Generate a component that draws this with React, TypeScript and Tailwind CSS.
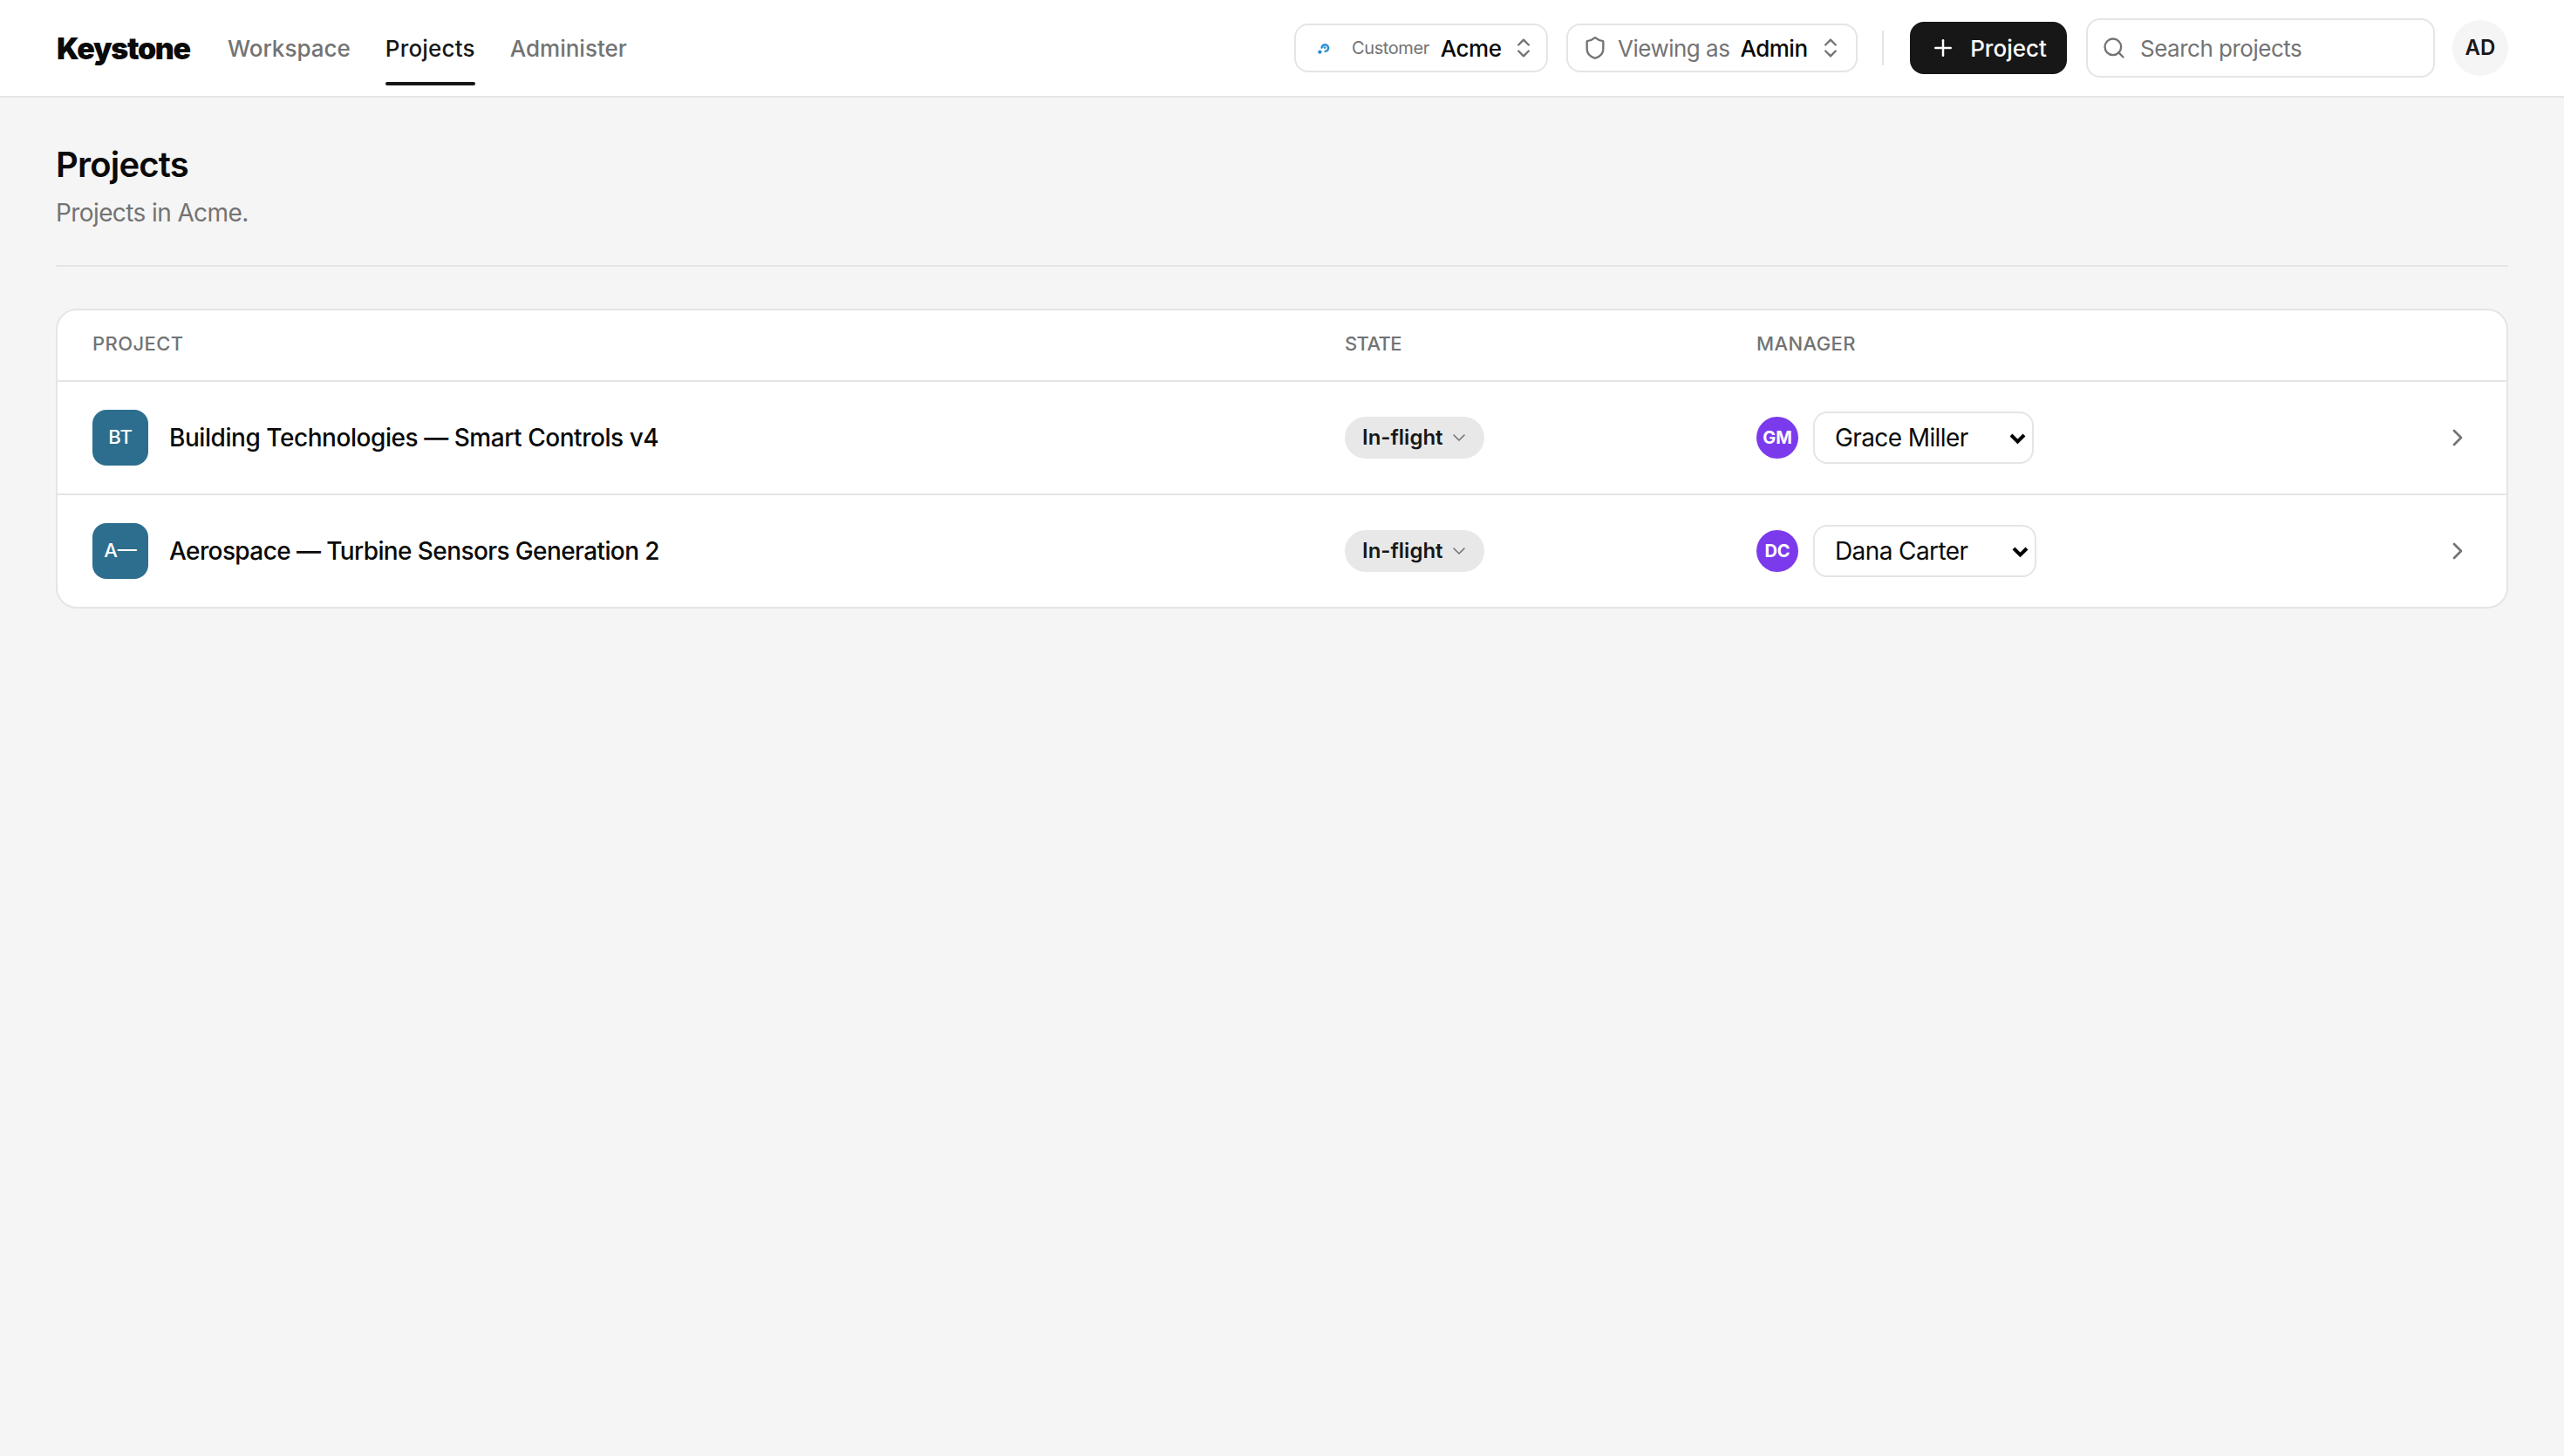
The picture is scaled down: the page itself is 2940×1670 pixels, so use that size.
import { ChevronDown, ChevronRight, ChevronsUpDown, Plus, Search, Shield } from "lucide-react";

const font = "font-['Inter','Liberation_Sans',sans-serif]";

// Small swirl mark next to the customer switcher
function CustomerMark() {
  return (
    <svg viewBox="0 0 14 13" className="w-[14px] h-[13px] shrink-0">
      <path d="M4.6 6.6a3.8 3.8 0 1 1 3 3.2" fill="none" stroke="#2b8fd0" strokeWidth="2.4" />
      <circle cx="8" cy="5.6" r="1.4" fill="#2b8fd0" />
      <circle cx="2.4" cy="10.6" r="2.2" fill="#2b8fd0" />
    </svg>
  );
}

function NavLink({ label, active }: { label: string; active?: boolean }) {
  return (
    <a
      className={`h-[110px] flex items-center relative text-[26px] font-medium ${active ? "text-[#171717] tracking-[0.2px]" : "text-[#737373]"}`}
    >
      {label}
      {active && <span className="absolute left-0 right-0 bottom-[12px] h-[4px] rounded-full bg-[#171717]" />}
    </a>
  );
}

const rows = [
  { code: "BT", name: "Building Technologies — Smart Controls v4", tracking: "tracking-[-0.45px]", initials: "GM", manager: "Grace Miller", width: "w-[253px]" },
  { code: "A—", name: "Aerospace — Turbine Sensors Generation 2", tracking: "tracking-[-0.6px]", initials: "DC", manager: "Dana Carter", width: "w-[256px]" },
];

function ProjectRow({ row, last }: { row: (typeof rows)[number]; last: boolean }) {
  return (
    <div
      className={`grid grid-cols-[1436px_472px_1fr_32px] items-center pl-[40px] pr-[40px] ${last ? "h-[128px]" : "h-[130px] border-b-2 border-[#e5e5e5]"}`}
    >
      <div className="flex items-center gap-[24px]">
        <div className="w-[64px] h-[64px] rounded-[16px] bg-[#2d6e8e] flex items-center justify-center text-white text-[22px] font-medium pb-[2px]">
          {row.code}
        </div>
        <span className={`text-[28px] font-medium text-[#0a0a0a] ${row.tracking}`}>{row.name}</span>
      </div>
      <div>
        <button className="h-[48px] w-[160px] rounded-full bg-[#e8e8e8] flex items-center pl-[20px] gap-[6px] text-[24px] font-semibold text-[#171717]">
          In-flight
          <ChevronDown size={24} strokeWidth={1.6} className="text-[#737373]" />
        </button>
      </div>
      <div className="flex items-center gap-[17px]">
        <div className="w-[48px] h-[48px] rounded-full bg-[#7c3aed] flex items-center justify-center text-white text-[20px] font-bold">
          {row.initials}
        </div>
        <div className={`relative ${row.width}`}>
          <select
            defaultValue={row.manager}
            className={`w-full h-[60px] appearance-none rounded-[16px] border-2 border-[#e5e5e5] bg-white pl-[23px] text-[28px] tracking-[-0.6px] text-[#0a0a0a] ${font}`}
          >
            <option>{row.manager}</option>
          </select>
          <svg viewBox="0 0 19 12" className="absolute right-[9px] top-[25px] w-[19px] h-[12px] pointer-events-none">
            <path d="M2 2l7.5 7.5L17 2" fill="none" stroke="#000" strokeWidth="4" />
          </svg>
        </div>
      </div>
      <ChevronRight size={32} strokeWidth={2} className="text-[#737373]" />
    </div>
  );
}

export default function App() {
  return (
    <div className={`min-h-[1670px] bg-[#f5f5f5] ${font}`}>
      <header className="h-[112px] bg-white border-b-2 border-[#e5e5e5] px-[64px] flex items-center">
        <span className="text-[34px] font-black tracking-[-1.3px] text-[#0a0a0a] ml-[1px] mr-[43px]">Keystone</span>
        <nav className="flex items-center gap-[40px]">
          <NavLink label="Workspace" />
          <NavLink label="Projects" active />
          <NavLink label="Administer" />
        </nav>
        <div className="ml-auto flex items-center whitespace-nowrap">
          <button className="h-[56px] w-[291px] rounded-[16px] border-2 border-[#e5e5e5] bg-white flex items-center pl-[25px] pr-[12px]">
            <CustomerMark />
            <span className="ml-[25px] text-[20px] tracking-[-0.4px] text-[#737373]">Customer</span>
            <span className="ml-[13px] text-[26px] tracking-[-0.5px] font-medium text-[#0a0a0a]">Acme</span>
            <ChevronsUpDown size={28} strokeWidth={2} className="ml-auto shrink-0 text-[#737373]" />
          </button>
          <button className="ml-[21px] h-[56px] w-[334px] rounded-[16px] border-2 border-[#e5e5e5] bg-white flex items-center pl-[17px] pr-[15px]">
            <Shield size={28} strokeWidth={2} className="shrink-0 text-[#737373]" />
            <span className="ml-[12px] text-[26px] tracking-[-0.5px] text-[#737373]">Viewing as</span>
            <span className="ml-[12px] text-[26px] tracking-[-0.5px] font-medium text-[#0a0a0a]">Admin</span>
            <ChevronsUpDown size={28} strokeWidth={2} className="ml-auto shrink-0 text-[#737373]" />
          </button>
          <div className="ml-[28px] w-[2px] h-[40px] bg-[#e5e5e5]" />
          <button className="ml-[30px] h-[60px] w-[180px] rounded-[16px] bg-[#171717] text-white flex items-center justify-center gap-[16px] text-[26px] font-medium">
            <Plus size={30} strokeWidth={2} />
            Project
          </button>
          <div className="ml-[22px] h-[68px] w-[400px] rounded-[16px] border-2 border-[#e5e5e5] bg-white flex items-center pl-[16px] gap-[16px]">
            <Search size={28} strokeWidth={2} className="text-[#737373]" />
            <input
              placeholder="Search projects"
              className="flex-1 min-w-0 bg-transparent outline-none text-[26px] tracking-[-0.5px] placeholder:text-[#737373]"
            />
          </div>
          <div className="ml-[20px] w-[64px] h-[64px] rounded-full bg-[#f5f5f5] flex items-center justify-center text-[24px] font-semibold text-[#171717]">
            AD
          </div>
        </div>
      </header>

      <main className="px-[64px]">
        <div className="pt-[53px] border-b-2 border-[#e5e5e5] h-[194px]">
          <h1 className="text-[40px] leading-[48px] tracking-[-0.8px] font-semibold text-[#0a0a0a]">Projects</h1>
          <p className="mt-[11px] text-[28px] leading-[40px] tracking-[-0.6px] text-[#737373]">Projects in Acme.</p>
        </div>

        <div className="mt-[48px] rounded-[24px] border-2 border-[#e5e5e5] bg-white overflow-hidden">
          <div className="grid grid-cols-[1436px_472px_1fr] items-center h-[82px] pl-[40px] pr-[40px] pb-[4px] border-b-2 border-[#e5e5e5] text-[22px] font-medium uppercase tracking-[0.4px] text-[#737373]">
            <span>Project</span>
            <span className="tracking-[-0.6px]">State</span>
            <span>Manager</span>
          </div>
          {rows.map((row, i) => (
            <ProjectRow key={row.code} row={row} last={i === rows.length - 1} />
          ))}
        </div>
      </main>
    </div>
  );
}
